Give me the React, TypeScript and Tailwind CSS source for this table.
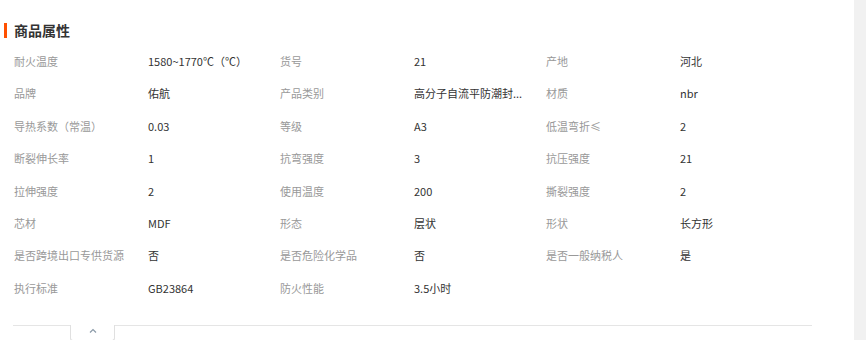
import React from "react";

type Attr = { label: string; value: string };

const attrs: Attr[] = [
  { label: "耐火温度", value: "1580~1770℃（℃）" },
  { label: "货号", value: "21" },
  { label: "产地", value: "河北" },
  { label: "品牌", value: "佑航" },
  { label: "产品类别", value: "高分子自流平防潮封..." },
  { label: "材质", value: "nbr" },
  { label: "导热系数（常温）", value: "0.03" },
  { label: "等级", value: "A3" },
  { label: "低温弯折≤", value: "2" },
  { label: "断裂伸长率", value: "1" },
  { label: "抗弯强度", value: "3" },
  { label: "抗压强度", value: "21" },
  { label: "拉伸强度", value: "2" },
  { label: "使用温度", value: "200" },
  { label: "撕裂强度", value: "2" },
  { label: "芯材", value: "MDF" },
  { label: "形态", value: "层状" },
  { label: "形状", value: "长方形" },
  { label: "是否跨境出口专供货源", value: "否" },
  { label: "是否危险化学品", value: "否" },
  { label: "是否一般纳税人", value: "是" },
  { label: "执行标准", value: "GB23864" },
  { label: "防火性能", value: "3.5小时" },
];

function AttrCell({ label, value }: Attr) {
  return (
    <div className="flex h-[32.4px] items-center">
      <span className="w-[134px] shrink-0 text-[#999]">{label}</span>
      <span className="whitespace-nowrap text-[#333]">{value}</span>
    </div>
  );
}

export default function App() {
  return (
    <div
      className="flex h-[340px] w-[866px] overflow-hidden bg-white text-[11px]"
      style={{ fontFamily: '"Noto Sans CJK SC", "Noto Sans", sans-serif' }}
    >
      <div className="flex-1">
        {/* section title */}
        <div className="flex h-[45px] items-center pl-[4px] pt-[15px]">
          <span className="h-[15px] w-[3px] bg-[#ff5000]" />
          <h2 className="ml-[7px] text-[14px] font-bold leading-none text-[#333]">商品属性</h2>
        </div>

        <div className="ml-[14px] grid w-[798px] grid-cols-3">
          {attrs.map((a) => (
            <AttrCell key={a.label} {...a} />
          ))}
        </div>

        {/* collapse handle */}
        <div className="ml-[13px] mt-[21px] w-[799px] border-t border-[#e5e5e5]">
          <div className="-mt-px ml-[57px] flex h-[16px] w-[45px] items-center justify-center rounded-b-[3px] border-x border-b border-[#e0e0e0] bg-white">
            <svg width="8" height="5" viewBox="0 0 8 5" className="-mt-[4px]">
              <polyline points="1,4.5 4,1.5 7,4.5" fill="none" stroke="#8b9aa8" strokeWidth="1.2" />
            </svg>
          </div>
        </div>
      </div>
      <div className="w-[12px] shrink-0 bg-[#f1f1f1]" />
    </div>
  );
}
